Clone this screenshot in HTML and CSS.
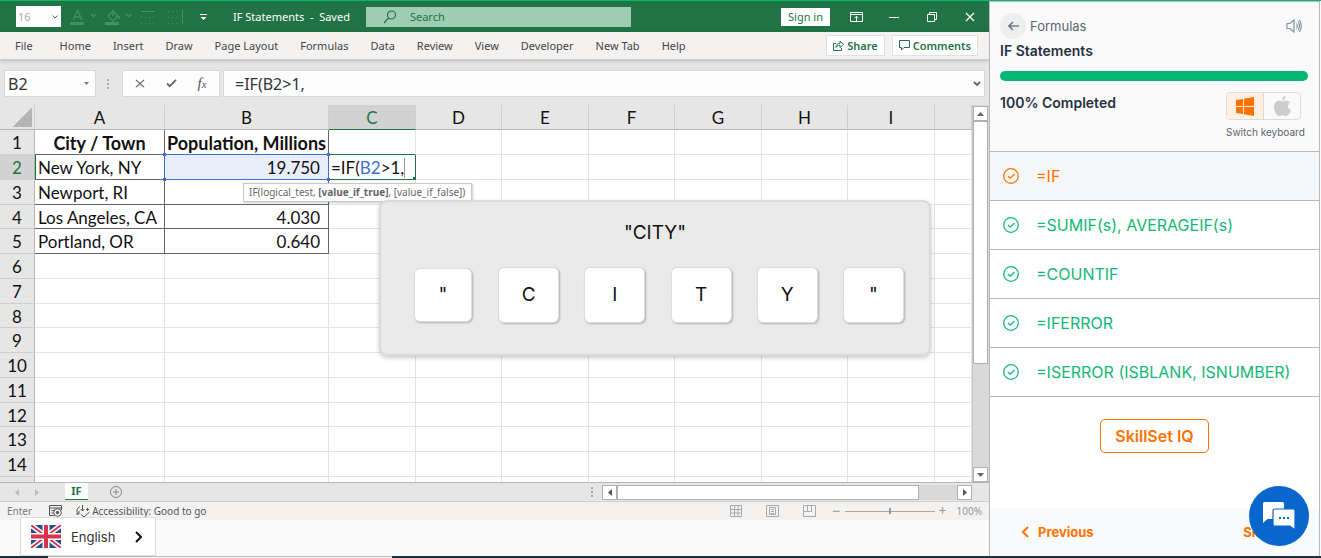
FILE: index.html
```html
<!DOCTYPE html>
<html lang="en">
<head>
    <meta charset="utf-8">
    <title>IF Statements</title>
    <link rel="stylesheet" href="styles.css">
</head>
<body>
    <div class="page">
        <main class="lesson">
            <div class="titlebar">
                <select class="font-size" aria-label="Font size" disabled>
                    <option>16</option>
                </select>
                <svg class="faded-tools" width="116" height="20" viewBox="0 0 116 20" fill="none" stroke="#4b9a6c">
                    <path d="M3 13L7.500 3L12 13M5 10h5M21 7l2.500 2.500L26 7M38 9l5-5l5 5l-5 5zM43 4v5M49 9v3M56 7l2.500 2.500L61 7" stroke-width="1.300"/>
                    <path d="M0 16.500h14M35 16.500h14" stroke-width="3"/>
                    <path d="M71 4.500h14"/>
                    <path d="M71 10.500h14M71 16.500h14M98 4.500h12M98 10.500h12M98 16.500h12" stroke-dasharray="1 3"/>
                    <path d="M112.500 3v14"/>
                </svg>
                <svg class="customize" width="9" height="8" viewBox="0 0 9 8"><path d="M1 1.500h7" stroke="#fff"/><path d="M1.500 4h6L4.500 7z" fill="#fff"/></svg>
                <span class="doc-name">IF Statements&nbsp; -&nbsp; Saved</span>
                <label class="search">
                    <svg width="14" height="14" viewBox="0 0 14 14" fill="none" stroke="#217346" stroke-width="1.2"><circle cx="8.500" cy="5" r="4"/><path d="M5.500 8L1 13"/></svg>
                    <input type="text" placeholder="Search" aria-label="Search">
                </label>
                <button class="sign-in">Sign in</button>
                <button class="win-btn" aria-label="Ribbon options"><svg width="13" height="10" viewBox="0 0 13 10" fill="none" stroke="#fff"><path d="M.5.5h12v9H.5zM.5 2.500h12M6.500 9V4.500M4.500 6.200l2-2l2 2"/></svg></button>
                <button class="win-btn" aria-label="Minimize"><svg width="10" height="10" viewBox="0 0 10 10" stroke="#fff"><path d="M0 5.500h10"/></svg></button>
                <button class="win-btn" aria-label="Restore"><svg width="10" height="10" viewBox="0 0 10 10" fill="none" stroke="#fff"><path d="M.5 2.500h7v7h-7zM2.500 2V.5h7v7H8"/></svg></button>
                <button class="win-btn" aria-label="Close"><svg width="10" height="10" viewBox="0 0 10 10" stroke="#fff" stroke-width="1.200"><path d="M1 1l8 8M9 1L1 9"/></svg></button>
            </div>

            <nav class="ribbon">
                <a class="file" href="#">File</a>
                <a href="#">Home</a>
                <a href="#">Insert</a>
                <a href="#">Draw</a>
                <a href="#">Page Layout</a>
                <a href="#">Formulas</a>
                <a href="#">Data</a>
                <a href="#">Review</a>
                <a href="#">View</a>
                <a href="#">Developer</a>
                <a href="#">New Tab</a>
                <a href="#">Help</a>
                <button class="ribbon-btn share"><svg width="11" height="11" viewBox="0 0 11 11" fill="none" stroke="#217346"><path d="M3 3.500H.5v7h8V8M3 7.500c0-3 1.500-4 4-4V1l3.500 3.500L7 7.500v-2c-2 0-3 .5-4 2z"/></svg>Share</button>
                <button class="ribbon-btn"><svg width="11" height="11" viewBox="0 0 11 11" fill="none" stroke="#217346"><path d="M.5.5h10v7H5l-2.500 2.500V7.500h-2z"/></svg>Comments</button>
            </nav>

            <div class="formula-bar">
                <label class="name-box">
                    <input type="text" value="B2" aria-label="Name box">
                    <svg width="5" height="3" viewBox="0 0 5 3"><path d="M0 0h5L2.500 3z" fill="#777"/></svg>
                </label>
                <span class="dots"></span>
                <div class="formula-btns">
                    <button aria-label="Cancel"><svg width="10" height="9" viewBox="0 0 11 10" stroke="#666" stroke-width="1.400"><path d="M1 1l9 8M10 1L1 9"/></svg></button>
                    <button aria-label="Enter"><svg width="11" height="9" viewBox="0 0 12 10" fill="none" stroke="#666" stroke-width="2"><path d="M1 5l3 3l7-7"/></svg></button>
                    <button class="fx">f<small>x</small></button>
                </div>
                <label class="formula">
                    <input type="text" value="=IF(B2&gt;1," aria-label="Formula">
                    <svg width="8" height="6" viewBox="0 0 8 6" fill="none" stroke="#666" stroke-width="1.800"><path d="M1 1l3 3l3-3"/></svg>
                </label>
            </div>

            <div class="sheet">
                <div class="grid">
                    <table>
                        <colgroup>
                            <col class="col-num"><col class="col-a"><col class="col-b">
                            <col class="col-odd"><col class="col-even"><col class="col-odd"><col class="col-even"><col class="col-odd"><col class="col-even"><col class="col-odd"><col>
                        </colgroup>
                        <thead>
                            <tr><th class="corner"></th><th>A</th><th>B</th><th class="active-col">C</th><th>D</th><th>E</th><th>F</th><th>G</th><th>H</th><th>I</th><th></th></tr>
                        </thead>
                        <tbody>
                            <tr><th>1</th><td class="data title">City / Town</td><td class="data title">Population, Millions</td><td class="above-edit"></td><td></td><td></td><td></td><td></td><td></td><td></td><td></td></tr>
                            <tr><th class="active-row">2</th><td class="data row-start">New York, NY</td><td class="data num picked">19.750</td><td class="editing">=IF(<span>B2</span>&gt;1,<i class="caret"></i></td><td></td><td></td><td></td><td></td><td></td><td></td><td></td></tr>
                            <tr><th>3</th><td class="data">Newport, RI</td><td class="data num"></td><td></td><td></td><td></td><td></td><td></td><td></td><td></td><td></td></tr>
                            <tr><th>4</th><td class="data">Los Angeles, CA</td><td class="data num">4.030</td><td></td><td></td><td></td><td></td><td></td><td></td><td></td><td></td></tr>
                            <tr><th>5</th><td class="data">Portland, OR</td><td class="data num">0.640</td><td></td><td></td><td></td><td></td><td></td><td></td><td></td><td></td></tr>
                            <tr><th>6</th><td></td><td></td><td></td><td></td><td></td><td></td><td></td><td></td><td></td><td></td></tr>
                            <tr><th>7</th><td></td><td></td><td></td><td></td><td></td><td></td><td></td><td></td><td></td><td></td></tr>
                            <tr><th>8</th><td></td><td></td><td></td><td></td><td></td><td></td><td></td><td></td><td></td><td></td></tr>
                            <tr><th>9</th><td></td><td></td><td></td><td></td><td></td><td></td><td></td><td></td><td></td><td></td></tr>
                            <tr><th>10</th><td></td><td></td><td></td><td></td><td></td><td></td><td></td><td></td><td></td><td></td></tr>
                            <tr><th>11</th><td></td><td></td><td></td><td></td><td></td><td></td><td></td><td></td><td></td><td></td></tr>
                            <tr><th>12</th><td></td><td></td><td></td><td></td><td></td><td></td><td></td><td></td><td></td><td></td></tr>
                            <tr><th>13</th><td></td><td></td><td></td><td></td><td></td><td></td><td></td><td></td><td></td><td></td></tr>
                            <tr><th>14</th><td></td><td></td><td></td><td></td><td></td><td></td><td></td><td></td><td></td><td></td></tr>
                            <tr class="cut"><th></th><td></td><td></td><td></td><td></td><td></td><td></td><td></td><td></td><td></td><td></td></tr>
                        </tbody>
                    </table>
                </div>
                <div class="vscroll">
                    <button aria-label="Scroll up"><svg width="7" height="4" viewBox="0 0 7 4"><path d="M0 4h7L3.500 0z" fill="#666"/></svg></button>
                    <div class="vthumb"></div>
                    <button aria-label="Scroll down"><svg width="7" height="4" viewBox="0 0 7 4"><path d="M0 0h7L3.500 4z" fill="#666"/></svg></button>
                </div>

                <div class="hint">IF(logical_test, <b>[value_if_true]</b>, [value_if_false])</div>
                <div class="keys-panel">
                    <p>"CITY"</p>
                    <div class="keys">
                        <kbd class="pressed">"</kbd><kbd>C</kbd><kbd>I</kbd><kbd>T</kbd><kbd>Y</kbd><kbd>"</kbd>
                    </div>
                </div>
            </div>

            <div class="tabs">
                <svg class="tab-arrows" width="24" height="7" viewBox="0 0 24 7" fill="#bbb"><path d="M4 0v7L0 3.500zM20 0v7l4-3.500z"/></svg>
                <a class="tab" href="#">IF</a>
                <button class="add-sheet" aria-label="New sheet"><svg width="12" height="12" viewBox="0 0 12 12" fill="none" stroke="#888"><circle cx="6" cy="6" r="5.500"/><path d="M3 6h6M6 3v6"/></svg></button>
                <span class="dots"></span>
                <div class="hscroll">
                    <button aria-label="Scroll left"><svg width="4" height="7" viewBox="0 0 4 7"><path d="M4 0v7L0 3.500z" fill="#555"/></svg></button>
                    <div class="hthumb"></div>
                    <button aria-label="Scroll right"><svg width="4" height="7" viewBox="0 0 4 7"><path d="M0 0v7l4-3.500z" fill="#555"/></svg></button>
                </div>
            </div>

            <div class="status">
                <span class="mode">Enter</span>
                <svg class="macro" width="13" height="12" viewBox="0 0 13 12" fill="none" stroke="#555"><path d="M5 10.500H.5V.5h12V5M.5 3h12M2.500 5.500h3M2.500 8h2"/><circle cx="8.500" cy="7.500" r="3.800"/><circle cx="8.500" cy="7.500" r="1.200" fill="#555"/></svg>
                <svg class="access" width="14" height="13" viewBox="0 0 14 13" fill="none" stroke="#555"><path d="M4 1.500C.5 3 0 7 2.500 9M0 9h3V6M6.500 0v6M4.500 4l2 2l2-2M11.500 3v3M10 4.500h3M5 9.500l3 2.500l5.500-5"/></svg>
                <span>Accessibility: Good to go</span>
                <div class="views">
                    <svg width="12" height="12" viewBox="0 0 12 12" fill="none" stroke="#aaa"><path d="M.5.5h11v11H.5zM4.500.5v11M8 .5v11M.5 4.500h11M.5 8h11"/></svg>
                    <svg width="13" height="12" viewBox="0 0 13 12" fill="none" stroke="#aaa"><path d="M.5.5h12v11H.5zM3.500 2.500h6v7h-6zM5 4.500h3M5 6.500h3M5 8.500h3"/></svg>
                    <svg width="13" height="12" viewBox="0 0 13 12" fill="none" stroke="#aaa"><path d="M.5.5h12v11H.5zM4.500.5v6h4M8.500.5v6M.5 6.500h4"/></svg>
                </div>
                <div class="zoom">
                    <span class="sign">&minus;</span>
                    <input type="range" min="0" max="200" value="100" aria-label="Zoom">
                    <span class="sign">+</span>
                    <span class="percent">100%</span>
                </div>
            </div>

            <button class="language">
                <svg width="30" height="23" viewBox="0 0 30 23">
                    <path d="M0 0h30v23H0z" fill="#2f4c91"/>
                    <path d="M0 0l30 23M30 0L0 23" stroke="#fff" stroke-width="5"/>
                    <path d="M0 0l30 23M30 0L0 23" stroke="#d9344d" stroke-width="1.800"/>
                    <path d="M15 0v23M0 11.500h30" stroke="#fff" stroke-width="7"/>
                    <path d="M15 0v23M0 11.500h30" stroke="#d9344d" stroke-width="4"/>
                </svg>
                English
                <svg class="more" width="7" height="12" viewBox="0 0 7 12" fill="none" stroke="#111" stroke-width="2"><path d="M1 1l5 5l-5 5"/></svg>
            </button>
        </main>

        <aside class="sidebar">
            <header class="progress-head">
                <div class="crumb">
                    <a class="back" href="#" aria-label="Back"><svg width="11" height="10" viewBox="0 0 11 10" fill="none" stroke="#6b7c8f" stroke-width="1.600"><path d="M11 5H1M5 1L1 5l4 4"/></svg></a>
                    <span>Formulas</span>
                    <button class="sound" aria-label="Sound"><svg width="16" height="14" viewBox="0 0 16 14" fill="none" stroke="#8492a0" stroke-width="1.200"><path d="M1 4.500h3L8 1v12L4 9.500H1zM10.500 4.500q1.500 2.500 0 5M12 2.500q3 4.500 0 9M13.500 1q3.500 6 0 12"/></svg></button>
                </div>
                <h1>IF Statements</h1>
                <div class="bar"></div>
                <div class="done">
                    <strong>100% Completed</strong>
                    <div class="keyboard">
                        <div class="switch">
                            <button class="on" aria-label="Windows"><svg width="18" height="19" viewBox="0 0 18 19" fill="#ff7200"><path d="M0 3l7-1v7H0zM8 1.800L18 0v9H8zM0 10h7v7l-7-1zM8 10h10v9L8 17.200z"/></svg></button>
                            <button aria-label="Mac"><svg width="17" height="20" viewBox="0 0 17 20" fill="#ccc"><path d="M11.500 0c.2 2-1.500 4.300-3.500 4.300C7.800 2.300 9.500.4 11.500 0zM8.500 5.500c1 0 2-1 4-1c1.500 0 2.900.8 3.700 2c-3.300 2-2.700 6.500.7 7.700C16 17 14.200 20 12.200 20c-1.300 0-1.900-.8-3.500-.8s-2.300.8-3.600.8C2.600 20 0 15.500 0 11.300C0 7 2.500 4.600 5 4.600c1.600 0 2.600.9 3.500.9z"/></svg></button>
                        </div>
                        <span>Switch keyboard</span>
                    </div>
                </div>
            </header>

            <nav class="lessons">
                <a class="current" href="#"><svg width="16" height="16" viewBox="0 0 16 16"><circle cx="8" cy="8" r="7.300"/><path d="M5 8l2.200 2.200L11.500 6"/></svg>=IF</a>
                <a href="#"><svg width="16" height="16" viewBox="0 0 16 16"><circle cx="8" cy="8" r="7.300"/><path d="M5 8l2.200 2.200L11.500 6"/></svg>=SUMIF(s), AVERAGEIF(s)</a>
                <a href="#"><svg width="16" height="16" viewBox="0 0 16 16"><circle cx="8" cy="8" r="7.300"/><path d="M5 8l2.200 2.200L11.500 6"/></svg>=COUNTIF</a>
                <a href="#"><svg width="16" height="16" viewBox="0 0 16 16"><circle cx="8" cy="8" r="7.300"/><path d="M5 8l2.200 2.200L11.500 6"/></svg>=IFERROR</a>
                <a href="#"><svg width="16" height="16" viewBox="0 0 16 16"><circle cx="8" cy="8" r="7.300"/><path d="M5 8l2.200 2.200L11.500 6"/></svg>=ISERROR (ISBLANK, ISNUMBER)</a>
            </nav>

            <button class="skillset">SkillSet IQ</button>

            <footer class="pager">
                <a href="#"><svg width="7" height="12" viewBox="0 0 7 12" fill="none" stroke="#ff7200" stroke-width="2"><path d="M6 1L1 6l5 5"/></svg>Previous</a>
                <a href="#">Skip</a>
            </footer>

            <button class="chat" aria-label="Chat">
                <svg width="32" height="28" viewBox="0 0 32 28">
                    <path d="M1.500 0h18a1.500 1.500 0 0 1 1.500 1.500V17H4.500L0 21V1.500A1.500 1.500 0 0 1 1.500 0z" fill="#fff"/>
                    <path d="M11.500 7h19A1.500 1.500 0 0 1 32 8.500V28l-5-4H11.500a1.500 1.500 0 0 1-1.500-1.500v-14A1.500 1.500 0 0 1 11.500 7z" fill="#fff" stroke="#0866cc" stroke-width="1.200"/>
                    <path d="M16 16h2M20 16h2M24 16h2" stroke="#0866cc" stroke-width="2"/>
                </svg>
            </button>
        </aside>
    </div>
    <div class="bottom-line"><span></span></div>
</body>
</html>
```

FILE: styles.css
```css
* {
    box-sizing: border-box;
}
body {
    margin: 0;
    min-height: 100vh;
    display: flex;
    flex-direction: column;
    background-color: #fafafa;
    border-top: 1px solid #04b874;
    font-family: Inter, sans-serif;
    color: #26323f;
}
button {
    display: flex;
    align-items: center;
    justify-content: center;
    border: none;
    padding: 0;
    background: none;
    font-family: inherit;
    cursor: pointer;
}
a {
    color: inherit;
    text-decoration: none;
}
input {
    border: none;
    padding: 0;
    min-width: 0;
    background: none;
    font-family: inherit;
    outline: none;
}
svg {
    flex-shrink: 0;
}
.page {
    flex: 1;
    display: flex;
}
.lesson {
    position: relative;
    flex: 1;
    min-width: 0;
    font-family: "Noto Sans", sans-serif;
    font-size: 11px;
    color: #444;
}

/* title bar */
.titlebar {
    display: flex;
    align-items: center;
    height: 31px;
    padding-left: 16px;
    background-color: #217346;
    color: white;
}
.font-size {
    width: 45px;
    height: 21px;
    padding: 0 4px 0 2px;
    appearance: none;
    border: none;
    border-radius: 0;
    background: white url("data:image/svg+xml,%3Csvg xmlns='http://www.w3.org/2000/svg' width='6' height='4' fill='none' stroke='%23217346'%3E%3Cpath d='M.5.5L3 3L5.500.5'/%3E%3C/svg%3E") no-repeat right 3px center;
    font-family: inherit;
    font-size: 11px;
    color: #aaa;
    opacity: 1;
}
.faded-tools {
    margin-left: 9px;
    opacity: 0.8;
}
.customize {
    margin-left: 13px;
}
.doc-name {
    margin-left: 25px;
    font-size: 11px;
    white-space: pre;
}
.search {
    display: flex;
    align-items: center;
    gap: 13px;
    width: 265px;
    height: 20px;
    margin-left: 16px;
    padding-left: 17px;
    background-color: #9fcdb3;
}
.search input {
    flex: 1;
    font-size: 11px;
}
.search input::placeholder {
    color: #217346;
}
.sign-in {
    width: 49px;
    height: 18px;
    margin-left: auto;
    margin-right: 7px;
    background-color: white;
    color: #217346;
    font-size: 11px;
}
.win-btn {
    width: 38px;
    height: 30px;
}

/* ribbon */
.ribbon {
    position: relative;
    display: flex;
    align-items: center;
    gap: 22px;
    height: 28px;
    padding: 0 11px 0 15px;
    background-color: #f3f2f1;
    border-bottom: 1px solid #cfcdcb;
    box-shadow: 0 1px 4px rgba(0, 0, 0, 0.2);
    white-space: nowrap;
}
.file {
    margin-right: 5px;
}
.ribbon-btn {
    gap: 3px;
    height: 21px;
    margin-left: -15px;
    padding: 0 6px;
    border: 1px solid #e3e1df;
    background-color: white;
    color: #217346;
    font-size: 11px;
    font-weight: 600;
}
.ribbon-btn.share {
    margin-left: auto;
}

/* formula bar */
.formula-bar {
    display: flex;
    align-items: center;
    height: 45px;
    padding: 2px 4px 0;
    background-color: #e6e6e6;
}
.name-box, .formula, .formula-btns {
    display: flex;
    align-items: center;
    height: 27px;
    background-color: #fdfdfd;
    border: 1px solid #d8d8d8;
}
.name-box {
    width: 92px;
    padding: 0 6px 0 3px;
}
.name-box input, .formula input {
    flex: 1;
    font-family: "Noto Sans", sans-serif;
    font-size: 16px;
    color: #333;
}
.dots {
    width: 2px;
    height: 10px;
    background: repeating-linear-gradient(#aaa 0 2px, transparent 2px 4px);
}
.formula-bar .dots {
    margin: 0 13px 0 11px;
}
.formula-btns {
    width: 98px;
    justify-content: space-around;
    padding: 0 2px;
}
.fx {
    font-family: "Liberation Serif", serif;
    font-style: italic;
    font-size: 15px;
    color: #555;
}
.fx small {
    font-size: 11px;
}
.formula {
    flex: 1;
    margin-left: 3px;
    padding: 0 3px 0 11px;
}

/* sheet */
.sheet {
    position: relative;
    display: flex;
    height: 378px;
    background-color: #e6e6e6;
    border-bottom: 1px solid #b5b5b5;
}
.grid {
    flex: 1;
    min-width: 0;
    overflow: hidden;
    background-color: white;
    border-right: 1px solid #c8c8c8;
}
table {
    width: 100%;
    table-layout: fixed;
    border-spacing: 0;
    font-family: Lato, sans-serif;
    font-size: 17px;
    line-height: 20px;
    color: #111;
}
.col-num {
    width: 35px;
}
.col-a {
    width: 130px;
}
.col-b {
    width: 164px;
}
.col-odd {
    width: 87px;
}
.col-even {
    width: 86px;
}
th, td {
    height: 25px;
    padding: 2px 0 0;
    border-right: 1px solid #e3e3e3;
    border-bottom: 1px solid #e3e3e3;
    white-space: nowrap;
}
tbody tr:nth-child(4n) th, tbody tr:nth-child(4n) td {
    height: 24px;
}
th {
    background-color: #e6e6e6;
    border-color: #cfcfcf;
    font-weight: 400;
}
thead th {
    border-bottom-color: #b5b5b5;
}
tbody th {
    border-right-color: #b5b5b5;
}
.corner {
    background: linear-gradient(135deg, transparent 50%, #b4b4b4 50%) no-repeat 12px 2px / 20px 20px #e6e6e6;
}
.active-col, .active-row {
    background-color: #d2d2d2;
    color: #217346;
}
thead .active-col {
    border-bottom-color: #217346;
}
.data {
    padding-left: 3px;
    border-color: #666;
}
.data.title {
    padding-left: 0;
    text-align: center;
    font-size: 18px;
    font-weight: 700;
}
.data.num {
    padding-right: 8px;
    text-align: right;
}
.data.row-start {
    border-left: 1px solid #217346;
    padding-left: 2px;
}
.data.picked {
    position: relative;
    background-color: #e8eef9;
    border-color: #3a6fd0;
    box-shadow: 0 -1px #3a6fd0, -1px 0 #3a6fd0;
}
/* corner handles of the picked cell */
.picked::after {
    content: "";
    position: absolute;
    inset: -2px;
    background:
        linear-gradient(#3a6fd0, #3a6fd0) left top / 3px 3px no-repeat,
        linear-gradient(#3a6fd0, #3a6fd0) right top / 3px 3px no-repeat,
        linear-gradient(#3a6fd0, #3a6fd0) left bottom / 3px 3px no-repeat,
        linear-gradient(#3a6fd0, #3a6fd0) right bottom / 3px 3px no-repeat;
}
.above-edit, .editing {
    border-bottom-color: #217346;
}
.editing {
    padding-left: 2px;
    border-right-color: #217346;
    background: linear-gradient(#217346, #217346) right bottom / 2px 2px no-repeat;
}
.editing span {
    color: #3a6fd0;
}
.caret {
    display: inline-block;
    height: 20px;
    border-left: 1px solid #999;
    vertical-align: top;
}
.cut th, .cut td {
    height: 8px;
}
.vscroll {
    display: flex;
    flex-direction: column;
    width: 16px;
    padding: 1px 1px 0 0;
    background-color: #d9d9d9;
}
.vscroll button, .hscroll button {
    width: 15px;
    height: 15px;
    background-color: white;
    border: 1px solid #b0b0b0;
}
.vscroll button:last-child {
    margin-top: auto;
}
.vthumb {
    height: 243px;
    background-color: white;
    border: 1px solid #b0b0b0;
}
.hint {
    position: absolute;
    left: 243px;
    top: 78px;
    padding: 0 6px 0 5px;
    background-color: white;
    border: 1px solid #c8c8c8;
    font-size: 10px;
    line-height: 17px;
    color: #666;
    white-space: nowrap;
    box-shadow: 1px 1px 2px rgba(0, 0, 0, 0.2);
}
.keys-panel {
    position: absolute;
    left: 379px;
    top: 95px;
    width: 552px;
    height: 156px;
    padding: 17px 25px 0 31px;
    border: 2px solid #dadada;
    border-radius: 8px;
    background-color: rgba(233, 233, 233, 0.94);
    box-shadow: 0 2px 4px rgba(0, 0, 0, 0.2);
    font-family: Inter, sans-serif;
    color: #111;
}
.keys-panel p {
    margin: 0 6px 20px 0;
    font-size: 19px;
    line-height: 28px;
    text-align: center;
}
.keys {
    display: flex;
    align-items: center;
    justify-content: space-between;
}
kbd {
    width: 61px;
    height: 56px;
    border: 1px solid #ddd;
    border-radius: 6px;
    background-color: white;
    box-shadow: 1px 1px 2px rgba(0, 0, 0, 0.25);
    font-family: inherit;
    font-size: 19px;
    line-height: 54px;
    text-align: center;
}
kbd.pressed {
    width: 58px;
    height: 54px;
    margin: 0 1px 0 2px;
    line-height: 52px;
}

/* sheet tabs and horizontal scroll */
.tabs {
    display: flex;
    align-items: center;
    height: 18px;
    padding-right: 17px;
    background-color: #e6e6e6;
}
.tab-arrows {
    margin-left: 15px;
}
.tab {
    width: 23px;
    height: 18px;
    margin: -2px 22px 0 26px;
    background-color: white;
    border-bottom: 1px solid #217346;
    color: #217346;
    font-size: 11px;
    font-weight: 700;
    line-height: 17px;
    text-align: center;
}
.tabs .dots {
    margin-left: auto;
    margin-right: 9px;
}
.hscroll {
    display: flex;
    width: 370px;
    background-color: #d9d9d9;
}
.hthumb {
    width: 302px;
    background-color: white;
    border: 1px solid #b0b0b0;
}
.hscroll button:last-child {
    margin-left: auto;
}

/* status bar */
.status {
    display: flex;
    align-items: center;
    height: 19px;
    padding: 0 7px;
    background-color: #f3f2f1;
    border-top: 1px solid #cfcfcf;
    font-size: 10px;
    color: #555;
}
.mode {
    color: #777;
}
.macro {
    margin-left: 17px;
}
.access {
    margin: 0 2px 0 14px;
}
.views {
    display: flex;
    gap: 24px;
    margin-left: auto;
}
.zoom {
    display: flex;
    align-items: center;
    gap: 4px;
    margin-left: 16px;
    color: #999;
}
.sign {
    font-size: 14px;
    line-height: 16px;
}
.zoom input {
    width: 90px;
    height: 10px;
    margin: 0;
    appearance: none;
    background: linear-gradient(#aaa, #aaa) no-repeat center / 100% 1px;
}
.zoom input::-webkit-slider-thumb {
    appearance: none;
    width: 2px;
    height: 6px;
    background-color: #999;
}
.percent {
    margin-left: 6px;
}
.language {
    position: absolute;
    left: 20px;
    bottom: 0;
    width: 136px;
    height: 39px;
    padding: 0 13px 0 10px;
    gap: 10px;
    background-color: white;
    border: 1px solid #ddd;
    font-family: Inter, sans-serif;
    font-size: 13px;
    color: #333;
}
.more {
    margin-left: auto;
}

/* sidebar */
.sidebar {
    position: relative;
    display: flex;
    flex-direction: column;
    width: 331px;
    margin-right: 1px;
    border: 1px solid #b9b9b9;
    border-bottom: none;
    background-color: white;
}
.progress-head {
    height: 150px;
    padding: 11px 11px 0 10px;
    background-color: #fafafa;
    border-bottom: 1px solid #b9b9b9;
}
.crumb {
    display: flex;
    align-items: center;
    gap: 4px;
    font-size: 13px;
    color: #5a6570;
}
.back {
    display: flex;
    align-items: center;
    justify-content: center;
    width: 26px;
    height: 26px;
    border-radius: 50%;
    background-color: #eee;
}
.sound {
    margin-left: auto;
    margin-right: 6px;
}
h1 {
    margin: 2px 0 10px;
    font-size: 14px;
    font-weight: 600;
    line-height: 20px;
}
.bar {
    height: 10px;
    border-radius: 5px;
    background-color: #04b874;
}
.done {
    display: flex;
    justify-content: space-between;
    margin-top: 11px;
    font-size: 14px;
    line-height: 22px;
}
.done strong {
    font-weight: 600;
}
.keyboard {
    width: 82px;
}
.keyboard span {
    display: block;
    margin-top: 4px;
    font-size: 10px;
    line-height: 16px;
    color: #5a6570;
}
.switch {
    display: flex;
    width: 75px;
    height: 28px;
    border: 1px solid #ddd;
    border-radius: 4px;
    overflow: hidden;
}
.switch button {
    flex: 1;
}
.switch .on {
    background-color: #fff0e5;
    border-right: 1px solid #e8d5c8;
}
.lessons a {
    display: flex;
    align-items: center;
    gap: 17px;
    height: 49px;
    padding-left: 13px;
    border-bottom: 1px solid #b9b9b9;
    font-size: 16px;
    color: #12b877;
}
.lessons svg {
    fill: none;
    stroke: currentColor;
    stroke-width: 1.3;
}
.lessons .current {
    background-color: #f4f6f8;
    color: #ff7200;
}
.skillset {
    align-self: center;
    width: 109px;
    height: 34px;
    margin-top: 22px;
    border: 1px solid #ff7200;
    border-radius: 5px;
    font-size: 16px;
    font-weight: 600;
    color: #ff7200;
}
.pager {
    display: flex;
    align-items: center;
    justify-content: space-between;
    height: 48px;
    margin-top: auto;
    padding: 0 48px 0 32px;
    background-color: #f9fafc;
    font-size: 13px;
    font-weight: 700;
    color: #ff7200;
}
.pager svg {
    margin-right: 9px;
    vertical-align: -1px;
}
.chat {
    position: absolute;
    right: 10px;
    bottom: 10px;
    width: 60px;
    height: 60px;
    border-radius: 50%;
    background-color: #0866cc;
}
.bottom-line {
    height: 2px;
    padding-left: 48px;
    background-color: #20303f;
}
.bottom-line span {
    display: block;
    width: 344px;
    height: 2px;
    background-color: #fafafa;
    border-top: 1px solid #b9b9b9;
}
```
